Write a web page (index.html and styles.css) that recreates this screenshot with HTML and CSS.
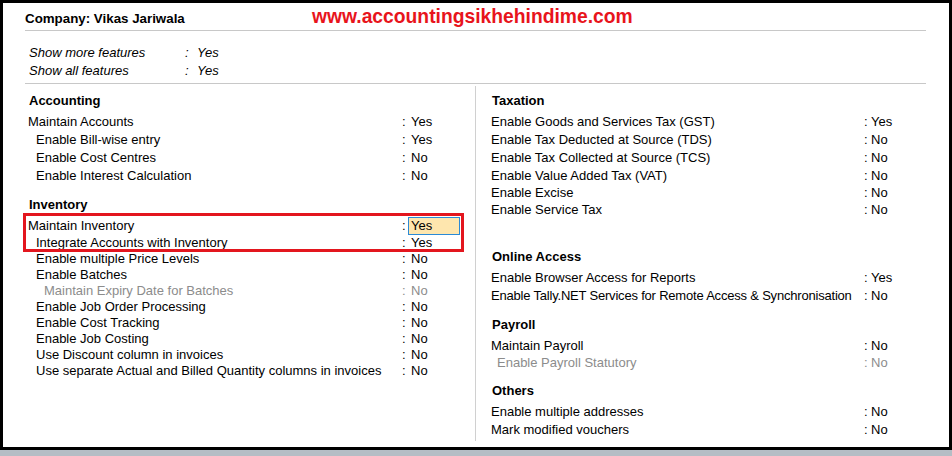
FILE: index.html
```html
<!DOCTYPE html>
<html>
<head>
<meta charset="utf-8">
<title>Company Features</title>
<link rel="stylesheet" href="styles.css">
</head>
<body>
<div class="screen">
  <div class="frame">
    <header class="topbar">
      <span class="company">Company: Vikas Jariwala</span>
      <span class="site">www.accountingsikhehindime.com</span>
    </header>
    <section class="show">
      <div class="srow"><span>Show more features</span><span>:</span><span>Yes</span></div>
      <div class="srow"><span>Show all features</span><span>:</span><span>Yes</span></div>
    </section>
    <main class="cols">
      <div class="col col-left">
        <div class="sec sec-acc">
          <h2 class="sec-title">Accounting</h2>
          <div class="rows r18">
            <div class="row"><span class="lbl">Maintain Accounts</span><span class="sep">:</span><span class="val">Yes</span></div>
            <div class="row"><span class="lbl i1">Enable Bill-wise entry</span><span class="sep">:</span><span class="val">Yes</span></div>
            <div class="row"><span class="lbl i1">Enable Cost Centres</span><span class="sep">:</span><span class="val">No</span></div>
            <div class="row"><span class="lbl i1">Enable Interest Calculation</span><span class="sep">:</span><span class="val">No</span></div>
          </div>
        </div>
        <div class="sec sec-inv">
          <h2 class="sec-title">Inventory</h2>
          <div class="rows r16 annotated">
            <div class="annot"></div>
            <div class="row tall"><span class="lbl">Maintain Inventory</span><span class="sep">:</span><span class="val hl">Yes</span></div>
            <div class="row"><span class="lbl i1">Integrate Accounts with Inventory</span><span class="sep">:</span><span class="val">Yes</span></div>
            <div class="row"><span class="lbl i1">Enable multiple Price Levels</span><span class="sep">:</span><span class="val">No</span></div>
            <div class="row"><span class="lbl i1">Enable Batches</span><span class="sep">:</span><span class="val">No</span></div>
            <div class="row dis"><span class="lbl i2">Maintain Expiry Date for Batches</span><span class="sep">:</span><span class="val">No</span></div>
            <div class="row"><span class="lbl i1">Enable Job Order Processing</span><span class="sep">:</span><span class="val">No</span></div>
            <div class="row"><span class="lbl i1">Enable Cost Tracking</span><span class="sep">:</span><span class="val">No</span></div>
            <div class="row"><span class="lbl i1">Enable Job Costing</span><span class="sep">:</span><span class="val">No</span></div>
            <div class="row"><span class="lbl i1">Use Discount column in invoices</span><span class="sep">:</span><span class="val">No</span></div>
            <div class="row"><span class="lbl i1">Use separate Actual and Billed Quantity columns in invoices</span><span class="sep">:</span><span class="val">No</span></div>
          </div>
        </div>
      </div>
      <div class="divider"></div>
      <div class="col col-right">
        <div class="sec sec-tax">
          <h2 class="sec-title">Taxation</h2>
          <div class="rows r18">
            <div class="row"><span class="lbl">Enable Goods and Services Tax (GST)</span><span class="sep">:</span><span class="val">Yes</span></div>
            <div class="row"><span class="lbl">Enable Tax Deducted at Source (TDS)</span><span class="sep">:</span><span class="val">No</span></div>
            <div class="row"><span class="lbl">Enable Tax Collected at Source (TCS)</span><span class="sep">:</span><span class="val">No</span></div>
            <div class="row"><span class="lbl">Enable Value Added Tax (VAT)</span><span class="sep">:</span><span class="val">No</span></div>
            <div class="row s16"><span class="lbl">Enable Excise</span><span class="sep">:</span><span class="val">No</span></div>
            <div class="row s17"><span class="lbl">Enable Service Tax</span><span class="sep">:</span><span class="val">No</span></div>
          </div>
        </div>
        <div class="sec sec-online">
          <h2 class="sec-title">Online Access</h2>
          <div class="rows r176">
            <div class="row"><span class="lbl">Enable Browser Access for Reports</span><span class="sep">:</span><span class="val">Yes</span></div>
            <div class="row"><span class="lbl tight">Enable Tally.NET Services for Remote Access &amp; Synchronisation</span><span class="sep">:</span><span class="val">No</span></div>
          </div>
        </div>
        <div class="sec sec-payroll">
          <h2 class="sec-title">Payroll</h2>
          <div class="rows r17">
            <div class="row"><span class="lbl">Maintain Payroll</span><span class="sep">:</span><span class="val">No</span></div>
            <div class="row dis"><span class="lbl i1">Enable Payroll Statutory</span><span class="sep">:</span><span class="val">No</span></div>
          </div>
        </div>
        <div class="sec sec-others">
          <h2 class="sec-title">Others</h2>
          <div class="rows r176">
            <div class="row"><span class="lbl">Enable multiple addresses</span><span class="sep">:</span><span class="val">No</span></div>
            <div class="row"><span class="lbl">Mark modified vouchers</span><span class="sep">:</span><span class="val">No</span></div>
          </div>
        </div>
      </div>
    </main>
  </div>
</div>
</body>
</html>
```

FILE: styles.css
```css
* {
  box-sizing: border-box;
  margin: 0;
  padding: 0;
}

body {
  margin: 0;
  font-family: "Liberation Sans", Arial, sans-serif;
  font-size: 13px;
  color: #000;
  background: #b5bdc5;
}

.screen {
  width: 952px;
  height: 456px;
  background: #b5bdc5;
}

.frame {
  height: 450px;
  border: 3px solid #000;
  background: #fff;
  padding: 0 23px 0 22px;
  display: flex;
  flex-direction: column;
}

/* top bar */
.topbar {
  height: 28px;
  flex: none;
  padding-top: 2.5px;
  border-bottom: 1px solid #c8c8c8;
  display: grid;
  grid-template-columns: 287px auto;
  align-items: baseline;
}

.company {
  font-weight: bold;
  font-size: 13.33px;
  line-height: 18px;
}

.site {
  font-weight: bold;
  font-size: 19.3px;
  line-height: 22px;
  color: #e8141c;
}

/* show features */
.show {
  flex: none;
  margin-top: 13px;
  padding-bottom: 3px;
  border-bottom: 1px solid #c8c8c8;
  font-style: italic;
}

.srow {
  display: grid;
  grid-template-columns: 156px 12px auto;
  padding-left: 4px;
  line-height: 18px;
}

/* columns */
.cols {
  flex: 1;
  display: grid;
  grid-template-columns: 450px 1px 1fr;
}

.divider {
  background: #d0d0d0;
  margin: 2px 0 6px;
}

.col {
  padding-top: 8px;
}

.sec-title {
  font-size: 13px;
  font-weight: bold;
  line-height: 18px;
}

.col-left .sec-title {
  padding-left: 4px;
  margin-bottom: 3px;
}

.col-right .sec-title {
  padding-left: 16px;
  margin-bottom: 3px;
}

.sec-inv {
  margin-top: 11px;
}

.sec-online {
  margin-top: 30px;
}

.sec-payroll {
  margin-top: 12px;
}

.sec-others {
  margin-top: 11px;
}

.row {
  display: grid;
  white-space: nowrap;
}

.col-left .row {
  grid-template-columns: 377px 9px 1fr;
}

.col-right .row {
  grid-template-columns: 388px 7px 1fr;
}

.col-left .lbl {
  padding-left: 3px;
}

.col-left .lbl.i1 {
  padding-left: 11px;
}

.col-left .lbl.i2 {
  padding-left: 19px;
}

.col-right .lbl {
  padding-left: 15px;
}

.col-right .lbl.i1 {
  padding-left: 21px;
}

.lbl.tight {
  letter-spacing: -0.2px;
}

.r18 .row {
  line-height: 18px;
}

.r18 .row.s17 {
  line-height: 17px;
}

.r18 .row.s16 {
  line-height: 16px;
}

.r17 .row {
  line-height: 17px;
}

.r16 .row {
  line-height: 16px;
}

.r16 .row.tall {
  line-height: 18px;
}

.r176 .row {
  line-height: 17.6px;
}

.dis {
  color: #8c8c8c;
}

/* focused value cell */
.val.hl {
  margin-left: -3px;
  padding-left: 3px;
  width: 52px;
  background: #fee6ae;
  box-shadow: inset 0 0 0 1px #2b8ad6;
}

/* red annotation rectangle drawn over the list */
.annotated {
  position: relative;
}

.annot {
  position: absolute;
  top: -4px;
  left: -2px;
  width: 441px;
  height: 39px;
  border: 3px solid #e3161e;
  pointer-events: none;
}
```
